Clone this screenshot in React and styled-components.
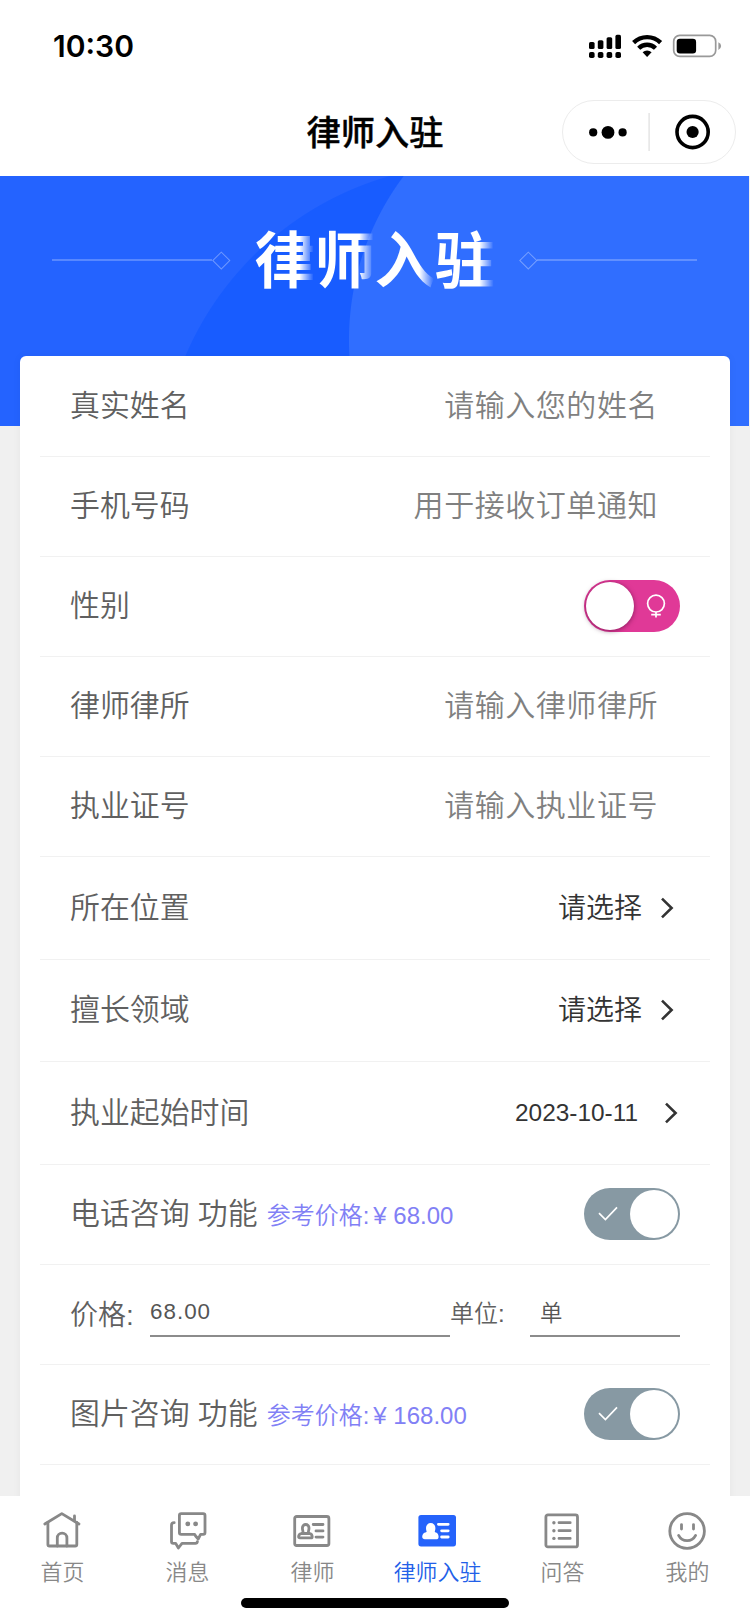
import React, { useState } from "react";
import styled, { createGlobalStyle } from "styled-components";

const tabs = [
  { key: "home", title: "首页" },
  { key: "message", title: "消息" },
  { key: "lawyer", title: "律师" },
  { key: "join", title: "律师入驻" },
  { key: "question", title: "问答" },
  { key: "mine", title: "我的" },
];

const StatusIcons = () => {
  return (
    <StatusSvg width="134" height="26" viewBox="588 33 134 26">
      <rect x="589" y="42" width="5.6" height="7" rx="1.6" />
      <rect x="597.8" y="40.2" width="5.6" height="8.8" rx="1.6" />
      <rect x="606.6" y="37.2" width="5.6" height="11.8" rx="1.6" />
      <rect x="615.4" y="34.8" width="5.6" height="14.2" rx="1.6" />
      <rect x="589" y="52" width="5.6" height="6" rx="1.8" />
      <rect x="597.8" y="52" width="5.6" height="6" rx="1.8" />
      <rect x="606.6" y="52" width="5.6" height="6" rx="1.8" />
      <rect x="615.4" y="52" width="5.6" height="6" rx="1.8" />
      <g fill="none" stroke="#000" strokeWidth="4.4">
        <path d="M633.6 42.6 a19.4 19.4 0 0 1 27 0" />
        <path d="M638.7 48.2 a12 12 0 0 1 16.8 0" />
      </g>
      <path d="M642.6 52.3 a6.6 6.6 0 0 1 9 0 l-4.5 4.6 z" />
      <rect
        x="673.7"
        y="35.4"
        width="42"
        height="21"
        rx="6"
        fill="none"
        stroke="#999"
        strokeWidth="1.7"
      />
      <rect x="676.7" y="38.8" width="19.4" height="14.6" rx="3.2" />
      <path d="M718.4 42.3 q2.7 1.2 2.7 3.8 q0 2.6 -2.7 3.8 z" fill="#999" />
    </StatusSvg>
  );
};

const Person = (props) => (
  <g {...props}>
    <path d="M10.8 22.4 C11.6 21 10.4 19.6 10.4 17 a3.3 3.5 0 0 1 6.6 0 C17 19.6 15.8 21 16.6 22.4" />
    <path d="M9.4 22.5 H17.8 q2.4 .6 2.4 3.2 q0 1.2 -1.2 1.2 H7.8 q-1.2 0 -1.2 -1.2 q0 -2.6 2.8 -3.2 z" />
  </g>
);

const TabIcon = ({ name }) => {
  if (name === "home") {
    return (
      <IconSvg viewBox="0 0 40 40">
        <path d="M2.8 13 L19.8 2.6 L37 13" />
        <path d="M5.9 11.5 V33.4 q0 1.6 1.6 1.6 H33.2 q1.6 0 1.6 -1.6 V11.5" />
        <path d="M15.3 35 V27 a4.8 4.8 0 0 1 9.6 0 V35" />
        <path d="M32.5 5 V10" />
      </IconSvg>
    );
  }
  if (name === "message") {
    return (
      <IconSvg viewBox="0 0 40 40">
        <path d="M14.2 2.6 H36.2 q1.8 0 1.8 1.8 V21.5 q0 1.8 -1.8 1.8 H33.6 L31.2 28 L28.6 25 L27.6 23.3 H14.2 q-1.8 0 -1.8 -1.8 V4.4 q0 -1.8 1.8 -1.8 z" />
        <path d="M7.2 11.7 q-2.7 0 -2.7 2.6 V30.4 q0 1.9 1.9 1.9 H8.6 L11.4 37 L15 32.3 H28.4 q1.8 0 2 -1.7" />
        <circle cx="20.8" cy="12.8" r="2.4" className="dot" />
        <circle cx="28.6" cy="12.8" r="2.4" className="dot" />
      </IconSvg>
    );
  }
  if (name === "lawyer") {
    return (
      <IconSvg viewBox="0 0 40 40">
        <rect x="2.7" y="5.5" width="34.2" height="29" rx="2" />
        <Person />
        <path d="M21.2 13.5 H31 M24 19.9 H31 M24 26.1 H31" />
      </IconSvg>
    );
  }
  if (name === "join") {
    return (
      <IconSvg viewBox="0 0 40 40">
        <rect x="1.4" y="4" width="37.6" height="31.4" rx="2.6" fill="#2563fb" stroke="none" />
        <Person fill="#fff" stroke="#fff" />
        <path d="M21.4 13.3 H31.2 M24.6 19.8 H31.2 M24.6 26 H31.2" stroke="#fff" />
      </IconSvg>
    );
  }
  if (name === "question") {
    return (
      <IconSvg viewBox="0 0 40 40">
        <rect x="3.9" y="3.9" width="31.6" height="32" rx="2" />
        <path d="M17 11.7 H28.2 M17 19.7 H28.2 M17 27.4 H28.2" />
        <circle cx="11.9" cy="11.7" r="1.7" className="dot" />
        <circle cx="11.9" cy="19.7" r="1.7" className="dot" />
        <circle cx="11.9" cy="27.4" r="1.7" className="dot" />
      </IconSvg>
    );
  }
  return (
    <IconSvg viewBox="0 0 40 40">
      <circle cx="20.1" cy="20" r="17.3" />
      <path d="M14.5 13.6 V18 M26.5 13.6 V18" />
      <path d="M11.6 24.4 Q14.4 29.7 20.1 29.7 Q25.8 29.7 28.6 24.4" />
    </IconSvg>
  );
};

const Arrow = ({ shift }) => (
  <ArrowSvg width="14" height="24" viewBox="0 0 14 24" $shift={shift}>
    <path d="M2 2.6 L11.6 12 L2 21.4" />
  </ArrowSvg>
);

const InputRow = ({ label, placeholder }) => (
  <Row>
    <Label>{label}</Label>
    <Input type="text" placeholder={placeholder} />
  </Row>
);

const ServiceRow = ({ label, price }) => {
  const [on, setOn] = useState(true);
  return (
    <Row>
      <Label>{label} 功能</Label>
      <Hint>
        参考价格:<Amount>¥ {price}</Amount>
      </Hint>
      <Switch $on={on} onClick={() => setOn(!on)}>
        <svg width="20" height="16" viewBox="0 0 20 16">
          <path d="M1 7.2 L7.4 13.6 L19 1.4" />
        </svg>
        <Knob />
      </Switch>
    </Row>
  );
};

const App = () => {
  const [price, setPrice] = useState("68.00");
  const [unit, setUnit] = useState("单");

  return (
    <Page>
      <GlobalStyle />
      <StatusBar>
        <Time>10:30</Time>
        <StatusIcons />
      </StatusBar>
      <NavBar>
        <NavTitle>律师入驻</NavTitle>
        <Capsule>
          <svg width="172" height="62" viewBox="0 0 172 62">
            <circle cx="30.2" cy="31.4" r="4.1" />
            <circle cx="45" cy="31.4" r="6.4" />
            <circle cx="59.6" cy="31.4" r="4.1" />
            <rect x="85.4" y="12" width="1.4" height="38" fill="#e3e3e3" />
            <circle cx="129.6" cy="31" r="15.6" fill="none" stroke="#000" strokeWidth="3.6" />
            <circle cx="129.6" cy="31" r="6.1" />
          </svg>
        </Capsule>
      </NavBar>
      <Content>
        <Banner>
          <Ornament>
            <Line />
            <Diamond />
          </Ornament>
          <BannerTitle>
            {"律师入驻".split("").map((char) => (
              <BannerChar key={char}>{char}</BannerChar>
            ))}
          </BannerTitle>
          <Ornament>
            <Diamond />
            <Line />
          </Ornament>
        </Banner>
        <Card>
          <InputRow label="真实姓名" placeholder="请输入您的姓名" />
          <InputRow label="手机号码" placeholder="用于接收订单通知" />
          <Row>
            <Label>性别</Label>
            <Switch $female>
              <Knob $shadow />
              <svg width="20" height="24" viewBox="0 0 20 24">
                <circle cx="10" cy="9.6" r="8.4" />
                <path d="M10 18 V23.4 M5.2 20.6 H14.8" />
              </svg>
            </Switch>
          </Row>
          <InputRow label="律师律所" placeholder="请输入律师律所" />
          <InputRow label="执业证号" placeholder="请输入执业证号" />
          <Row $height={103}>
            <Label>所在位置</Label>
            <Picked>请选择</Picked>
            <Arrow />
          </Row>
          <Row $height={102}>
            <Label>擅长领域</Label>
            <Picked>请选择</Picked>
            <Arrow />
          </Row>
          <Row $height={103}>
            <Label>执业起始时间</Label>
            <Picked $date>2023-10-11</Picked>
            <Arrow shift />
          </Row>
          <ServiceRow label="电话咨询" price="68.00" />
          <Row>
            <PriceLabel>价格:</PriceLabel>
            <LineInput
              $width={300}
              value={price}
              onChange={(ev) => setPrice(ev.target.value)}
            />
            <UnitLabel>单位:</UnitLabel>
            <LineInput
              $width={150}
              $pad={10}
              value={unit}
              onChange={(ev) => setUnit(ev.target.value)}
            />
          </Row>
          <ServiceRow label="图片咨询" price="168.00" />
          <Row />
        </Card>
      </Content>
      <TabBar>
        <Tabs>
          {tabs.map((tab) => (
            <Tab key={tab.key} $active={tab.key === "join"}>
              <TabIcon name={tab.key} />
              <TabTitle>{tab.title}</TabTitle>
            </Tab>
          ))}
        </Tabs>
        <HomeIndicator />
      </TabBar>
    </Page>
  );
};

const GlobalStyle = createGlobalStyle`
  * {
    box-sizing: border-box;
  }

  body {
    margin: 0;
    background: #f0f0f0;
  }

  input, button {
    font-family: inherit;
  }
`;

const Page = styled.div`
  display: flex;
  flex-direction: column;
  width: 750px;
  height: 1624px;
  overflow: hidden;
  background: #f0f0f0;
  font-family: "Liberation Sans", "Noto Sans CJK SC", sans-serif;
  font-weight: 350;
  color: #333;
`;

const StatusBar = styled.div`
  display: flex;
  flex: none;
  justify-content: space-between;
  align-items: center;
  height: 92px;
  padding: 0 28px 0 53px;
  background: #fff;
`;

const Time = styled.div`
  font-family: Inter, sans-serif;
  font-size: 30px;
  font-weight: 600;
  color: #000;
`;

const StatusSvg = styled.svg`
  fill: #000;
`;

const NavBar = styled.div`
  display: grid;
  flex: none;
  grid-template-columns: 1fr auto 1fr;
  align-items: center;
  height: 84px;
  padding: 0 14px 4px;
  background: #fff;
`;

const NavTitle = styled.div`
  grid-column: 2;
  padding-top: 2px;
  font-size: 34.2px;
  line-height: 48px;
  font-weight: 500;
  color: #000;
  -webkit-text-stroke: 0.4px #000;
`;

const Capsule = styled.div`
  justify-self: end;
  width: 174px;
  height: 64px;
  border: 1px solid #ececec;
  border-radius: 32px;

  svg {
    display: block;
  }
`;

const Content = styled.div`
  flex: 1;
  min-height: 0;
  overflow: hidden;
`;

const Banner = styled.div`
  display: flex;
  justify-content: space-between;
  width: 748.6px;
  height: 250px;
  padding: 0 51.6px 0 52px;
  background:
    radial-gradient(circle at 622px 164px, #306eff 272.5px, transparent 273.5px),
    radial-gradient(circle at 476px 304px, #185cff 315.5px, transparent 316.5px),
    #2463ff;
`;

const Ornament = styled.div`
  display: flex;
  align-items: center;
  width: 178px;
  height: 168px;
`;

const Line = styled.div`
  flex: 1;
  height: 2px;
  background: rgba(255, 255, 255, 0.24);
`;

const Diamond = styled.div`
  width: 12.6px;
  height: 12.6px;
  margin: 0 2.6px;
  border: 1.4px solid rgba(255, 255, 255, 0.34);
  transform: rotate(45deg);
`;

const BannerTitle = styled.div`
  display: flex;
  height: 172px;
  align-items: center;
`;

const BannerChar = styled.span`
  width: 60px;
  font-size: 61px;
  line-height: 90px;
  font-weight: 700;
  color: transparent;
  background: linear-gradient(90deg, #fff 74%, rgba(255, 255, 255, 0) 98%);
  background-clip: text;
  -webkit-background-clip: text;
`;

const Card = styled.div`
  position: relative;
  width: 710px;
  margin: -70px auto 0;
  padding: 0 20px;
  border-radius: 6px;
  background: #fff;
  box-shadow: 0 0 8px rgba(0, 0, 0, 0.05);
`;

const Row = styled.div`
  display: flex;
  align-items: center;
  height: ${(props) => props.$height || 100}px;
  padding: 0 30px;

  & + & {
    padding-bottom: 1px;
    border-top: 1px solid #f1f1f1;
  }
`;

const Label = styled.div`
  font-size: 29.9px;
  line-height: 44px;
  white-space: nowrap;
  color: #606060;
`;

const Input = styled.input`
  flex: 1;
  min-width: 0;
  height: 60px;
  padding: 0 22px 0 0;
  border: none;
  outline: none;
  background: transparent;
  font-size: 30px;
  font-weight: 350;
  letter-spacing: 0.55px;
  text-align: right;

  &::placeholder {
    color: #808080;
  }
`;

const Hint = styled.div`
  margin: 3px 0 0 9px;
  font-size: 24px;
  line-height: 36px;
  color: #8180f5;
`;

const Amount = styled.span`
  margin-left: 4px;
`;

const Switch = styled.div`
  display: flex;
  align-items: center;
  justify-content: space-between;
  flex-direction: ${(props) => (props.$on === false ? "row-reverse" : "row")};
  width: 96px;
  height: 52px;
  margin-left: auto;
  padding: ${(props) => (props.$female ? "0 14px 0 2px" : "0 2px 0 14px")};
  border-radius: 26px;
  background: ${(props) => (props.$female ? "#e03997" : "#8799a3")};

  svg {
    fill: none;
    stroke: #fff;
    stroke-width: 1.7;
  }
`;

const Knob = styled.div`
  width: 48px;
  height: 48px;
  border-radius: 50%;
  background: #fff;
  box-shadow: ${(props) => (props.$shadow ? "0 1px 5px rgba(60, 0, 40, 0.55)" : "none")};
`;

const Picked = styled.div`
  margin-left: auto;
  margin-right: ${(props) => (props.$date ? 26 : 18)}px;
  padding-top: ${(props) => (props.$date ? 0 : 2)}px;
  font-size: ${(props) => (props.$date ? 24.4 : 28)}px;
  line-height: 40px;
  color: #333;
`;

const ArrowSvg = styled.svg`
  margin-right: ${(props) => (props.$shift ? 2 : 6)}px;
  fill: none;
  stroke: #333;
  stroke-width: 2.6;
`;

const PriceLabel = styled.div`
  width: 80px;
  padding-bottom: 3px;
  font-size: 28px;
  color: #606060;
`;

const UnitLabel = styled.div`
  width: 80px;
  padding-bottom: 5px;
  font-size: 24px;
  color: #606060;
`;

const LineInput = styled.input`
  width: ${(props) => props.$width}px;
  height: 45px;
  padding: 0 0 ${(props) => (props.$pad ? 4 : 2)}px ${(props) => props.$pad || 0}px;
  border: none;
  border-bottom: 2px solid #8c8c8c;
  outline: none;
  background: transparent;
  font-size: 22.4px;
  font-weight: 350;
  letter-spacing: 1px;
  color: #555;
`;

const TabBar = styled.div`
  display: flex;
  flex: none;
  flex-direction: column;
  align-items: center;
  height: 128px;
  background: #fff;
`;

const Tabs = styled.div`
  display: flex;
  width: 100%;
  height: 101px;
`;

const Tab = styled.div`
  display: flex;
  flex: 1;
  flex-direction: column;
  align-items: center;
  padding-top: 15px;
  color: ${(props) => (props.$active ? "#2260e8" : "#888")};
`;

const IconSvg = styled.svg`
  width: 40px;
  height: 40px;
  margin-right: 1px;
  fill: none;
  stroke: #888;
  stroke-width: 2.8;
  stroke-linecap: round;
  stroke-linejoin: round;

  .dot {
    fill: #888;
    stroke: none;
  }
`;

const TabTitle = styled.div`
  margin-top: 6px;
  font-size: 21.9px;
  line-height: 32px;
  white-space: nowrap;
`;

const HomeIndicator = styled.div`
  width: 268px;
  height: 10px;
  margin-top: 1px;
  border-radius: 5px;
  background: #000;
`;

export default App;
